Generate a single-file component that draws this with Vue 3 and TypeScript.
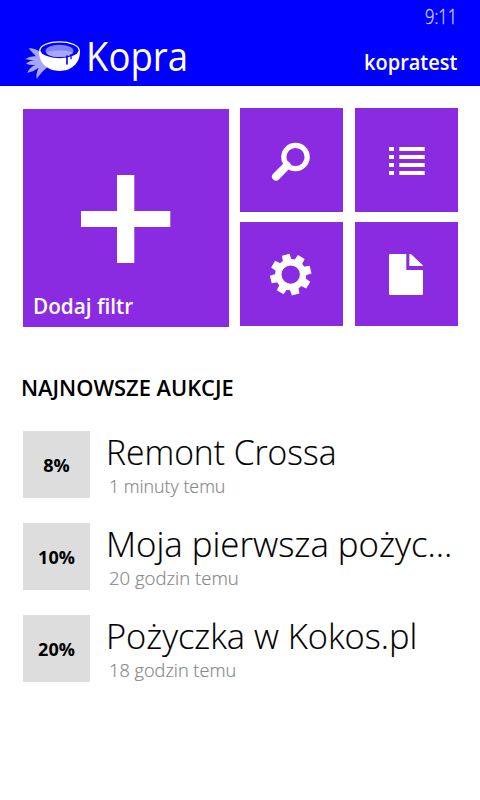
<script setup lang="ts">
interface Auction {
  rate: string
  title: string
  age: string
  fit: string
}

const auctions: Auction[] = [
  { rate: '8%', title: 'Remont Crossa', age: '1 minuty temu', fit: 'first' },
  { rate: '10%', title: 'Moja pierwsza pożyc...', age: '20 godzin temu', fit: 'second' },
  { rate: '20%', title: 'Pożyczka w Kokos.pl', age: '18 godzin temu', fit: 'third' },
]

const toothAngles: number[] = Array.from({ length: 8 }, (_, i) => i * 45 - 14)
const listRows: number[] = [0, 8, 16, 24]
</script>

<template>
  <div class="screen">
    <header class="header">
      <div class="status"><span class="time">9:11</span></div>
      <div class="brand-row">
        <svg class="logo" viewBox="72 120 174 120">
          <path
            fill="#a6a6ff"
            d="M86 144 Q108 145 123 158 L146 198 Q126 214 110 236 Q107 222 116 203 Q101 215 81 219 Q88 202 107 194 Q92 197 78 191 Q88 182 105 181 Q90 181 76 177 Q90 167 108 169 Q96 158 86 144Z"
          />
          <path fill="#fff" d="M117 154 C117 114 240 114 240 154 C240 192 212 213 179 213 C145 213 117 192 117 154Z" />
          <ellipse cx="178.500" cy="151" rx="57" ry="23.500" fill="#00f" />
          <ellipse cx="178.500" cy="152.500" rx="42" ry="18.500" fill="#8080ff" />
          <path fill="#a8a8ff" d="M138 158 C153 149 204 149 219 158 C211 175 146 175 138 158Z" />
          <path fill="none" stroke="#00f" stroke-width="5" stroke-linecap="round" d="M201 168V192" />
          <path fill="none" stroke="#00f" stroke-width="4" stroke-linecap="round" d="M213 164V176" />
        </svg>
        <span class="brand">Kopra</span>
        <span class="user">kopratest</span>
      </div>
    </header>

    <nav class="tiles">
      <button class="tile tile-main">
        <svg class="plus" viewBox="0 0 90 88">
          <path fill="#fff" d="M36 0H53.300V36H89.300V52H53.300V88H36V52H0V36H36Z" />
        </svg>
        <span class="tile-label">Dodaj filtr</span>
      </button>
      <div class="tile-grid">
        <button class="tile">
          <svg class="icon" viewBox="0 0 103 104">
            <circle cx="55.500" cy="49" r="11.700" fill="none" stroke="#fff" stroke-width="5.200" />
            <path d="M36 68.600L47 57.500" stroke="#fff" stroke-width="8" stroke-linecap="round" />
          </svg>
        </button>
        <button class="tile">
          <svg class="icon" viewBox="0 0 103 104">
            <g v-for="y in listRows" :key="y" fill="#fff">
              <rect x="34" :y="39 + y" width="5" height="4" />
              <rect x="44.300" :y="39 + y" width="25.400" height="4" />
            </g>
          </svg>
        </button>
        <button class="tile">
          <svg class="icon" viewBox="0 0 103 104">
            <g transform="translate(50.700 52.600)">
              <circle r="12.400" fill="none" stroke="#fff" stroke-width="6.400" />
              <path
                v-for="angle in toothAngles"
                :key="angle"
                :transform="`rotate(${angle})`"
                fill="#fff"
                d="M-4.500 -13L-3.900 -20.500H3.900L4.500 -13Z"
              />
            </g>
          </svg>
        </button>
        <button class="tile">
          <svg class="icon" viewBox="0 0 103 104">
            <path fill="#fff" d="M35 32H51.300V48H68V72Q68 73 67 73H35Q34 73 34 72V33Q34 32 35 32Z" />
            <path fill="#fff" d="M54.300 32H56L68 43.500V44H54.300Z" />
          </svg>
        </button>
      </div>
    </nav>

    <main class="auctions">
      <h2 class="heading"><span class="heading-text">NAJNOWSZE AUKCJE</span></h2>
      <ul class="list">
        <li v-for="item in auctions" :key="item.title" class="row" :class="item.fit">
          <div class="rate"><span class="rate-text">{{ item.rate }}</span></div>
          <div class="details">
            <span class="title">{{ item.title }}</span>
            <span class="age">{{ item.age }}</span>
          </div>
        </li>
      </ul>
    </main>
  </div>
</template>

<style>
body {
  margin: 0;
  background: #fff;
}
</style>

<style scoped>
.screen {
  width: 480px;
  height: 800px;
  overflow: hidden;
  background: #fff;
  color: #000;
  font-family: 'Open Sans', 'Noto Sans', sans-serif;
}
.header {
  box-sizing: border-box;
  height: 86px;
  padding: 0 23px 0 24px;
  background: #00f;
  color: #fff;
}
.status {
  display: flex;
  justify-content: flex-end;
  height: 32px;
}
.time {
  font-size: 20px;
  font-weight: 300;
  line-height: 34px;
  color: #d4d4ff;
  -webkit-text-stroke: 0.3px #d4d4ff;
  transform: scaleX(0.82);
  transform-origin: right;
}
.brand-row {
  display: flex;
  align-items: flex-start;
}
.logo {
  width: 58px;
  height: 40px;
  margin-top: 8px;
}
.brand {
  margin-left: 4px;
  font-size: 40px;
  line-height: 48px;
  transform: scaleX(0.915);
  transform-origin: left;
}
.user {
  margin: 15px 0 0 auto;
  font-size: 21.500px;
  font-weight: 600;
  line-height: 30px;
  transform: scaleX(0.93);
  transform-origin: right;
}
.tiles {
  display: flex;
  gap: 11px;
  padding: 22px 0 0 23px;
}
.tile {
  display: flex;
  margin: 0;
  padding: 0;
  border: 0;
  background: #8a2be2;
  color: #fff;
  font-family: inherit;
}
.tile-main {
  flex-direction: column;
  align-items: flex-start;
  width: 206px;
  height: 218px;
  margin-top: 1px;
}
.plus {
  width: 90px;
  height: 88px;
  margin: 66px 0 0 58px;
}
.tile-label {
  margin: 28px 0 0 10px;
  font-size: 21.500px;
  font-weight: 600;
  line-height: 30px;
  transform: scaleX(0.965);
  transform-origin: left;
}
.tile-grid {
  display: grid;
  grid-template-columns: 103px 103px;
  grid-template-rows: 104px 104px;
  gap: 10px 12px;
}
.icon {
  width: 103px;
  height: 104px;
}
.auctions {
  padding: 45px 0 0 23px;
}
.heading {
  margin: 0 0 0 -2px;
  font-size: 22px;
  font-weight: 600;
  line-height: 30px;
}
.heading-text {
  display: inline-block;
  transform: scaleX(0.993);
  transform-origin: left;
}
.list {
  display: flex;
  flex-direction: column;
  gap: 25px;
  margin: 0;
  padding: 29px 0 0;
  list-style: none;
}
.row {
  display: flex;
  gap: 16px;
  height: 67px;
}
.rate {
  display: flex;
  align-items: center;
  justify-content: center;
  width: 67px;
  height: 67px;
  background: #ddd;
  font-size: 18px;
  font-weight: 700;
}
.details {
  display: flex;
  flex-direction: column;
  align-items: flex-start;
  white-space: nowrap;
}
.title {
  font-size: 35.500px;
  font-weight: 300;
  line-height: 40px;
  -webkit-text-stroke: 0.15px #000;
  transform-origin: left;
}
.age {
  margin-left: 3px;
  font-size: 18px;
  font-weight: 300;
  line-height: 30px;
  color: #888;
  -webkit-text-stroke: 0.2px #888;
  transform-origin: left;
}
.first .title {
  transform: scaleX(0.947);
}
.second .title {
  transform: scaleX(0.98);
}
.third .title {
  transform: scaleX(0.969);
}
.first .age {
  transform: scaleX(0.99);
}
.second .age {
  transform: scaleX(1.03);
}
.third .age {
  transform: scaleX(1.01);
}
</style>
